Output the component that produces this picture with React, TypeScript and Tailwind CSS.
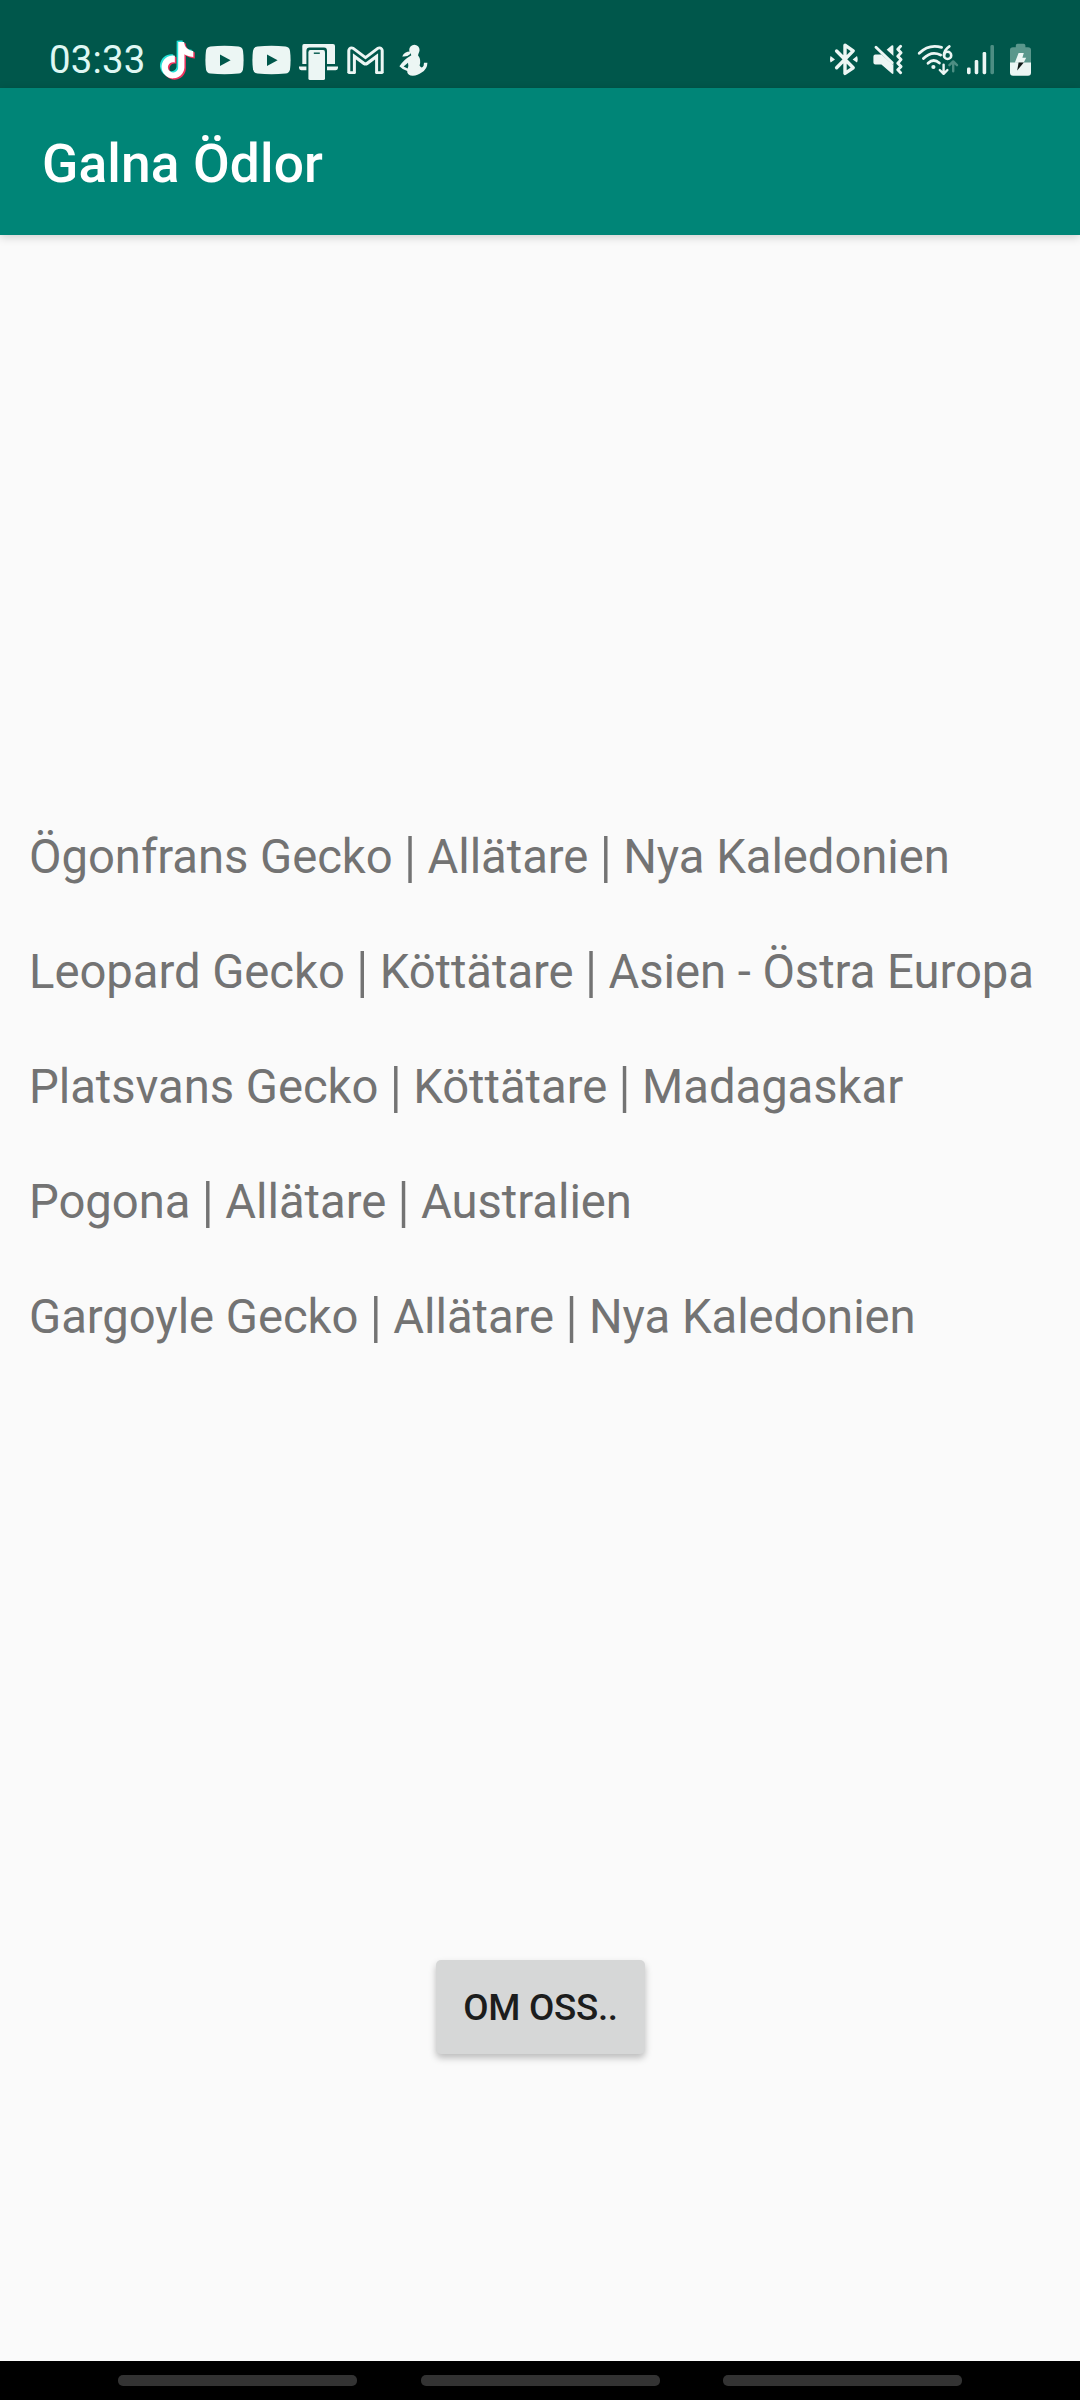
import React from "react";

const INK = "#ecf6f4";
const BAR = "#00574b";

const TIKTOK =
  "M12.525.02c1.31-.02 2.61-.01 3.91-.02.08 1.53.63 3.09 1.75 4.17 1.12 1.11 2.7 1.62 4.24 1.79v4.03c-1.44-.05-2.89-.35-4.2-.97-.57-.26-1.1-.59-1.62-.93-.01 2.92.01 5.84-.02 8.75-.08 1.4-.54 2.79-1.35 3.94-1.31 1.92-3.58 3.17-5.91 3.21-1.43.08-2.86-.31-4.08-1.03-2.02-1.19-3.44-3.37-3.65-5.71-.02-.5-.03-1-.01-1.49.18-1.9 1.12-3.72 2.58-4.96 1.66-1.44 3.98-2.13 6.15-1.72.02 1.48-.04 2.96-.04 4.44-.99-.32-2.15-.23-3.02.37-.63.41-1.11 1.04-1.36 1.75-.21.51-.15 1.07-.14 1.61.24 1.64 1.82 3.02 3.5 2.87 1.12-.01 2.19-.66 2.77-1.61.19-.33.4-.67.41-1.06.1-1.79.06-3.57.07-5.36.01-4.03-.01-8.05.02-12.07z";

function TikTokIcon() {
  return (
    <svg className="h-12 w-9" viewBox="0 0 36 48">
      <path d={TIKTOK} fill="#25e0d6" transform="translate(-2.4 4.6) scale(1.52)" />
      <path d={TIKTOK} fill="#f0355f" transform="translate(.7 7.2) scale(1.52)" />
      <path d={TIKTOK} fill="#fff" transform="translate(-.8 5.9) scale(1.52)" />
    </svg>
  );
}

function YouTubeIcon() {
  return (
    <svg className="h-12 w-[39px]" viewBox="0 0 39 48">
      <path
        d="M5.5 10.4Q19.5 9.2 33.5 10.4Q37.4 10.8 38 14.8Q39.2 24 38 33.2Q37.4 37.2 33.5 37.6Q19.5 38.8 5.5 37.6Q1.6 37.2 1 33.2Q-.2 24 1 14.8Q1.6 10.8 5.5 10.4Z"
        fill={INK}
      />
      <path d="M15 18.4 25.6 24.2 15 30Z" fill={BAR} />
    </svg>
  );
}

function DeviceLinkIcon() {
  return (
    <svg className="h-12 w-[39px]" viewBox="0 0 39 48">
      <path d="M5 8H34Q36 8 36 10V28H3.3V10Q3.3 8 5 8Z" fill={INK} />
      <path d="M0 30.6H39V32Q38.6 34.2 36.6 34.2H2.4Q.4 34.2 0 32Z" fill={INK} />
      <path d="M7.4 45V15Q7.4 11.6 10.6 11.6H25Q28 11.6 28 15V45Z" fill={BAR} />
      <path d="M9.4 16.4Q9.4 14 11.4 14H24.2Q26 14 26 16.4V42.4Q26 44 24.4 44H11Q9.4 44 9.4 42.4Z" fill={INK} />
      <path d="M14.8 17.2H20.8" stroke={BAR} strokeWidth="1.4" />
    </svg>
  );
}

function GmailIcon() {
  return (
    <svg className="h-12 w-[37px]" viewBox="0 0 37 48" fill="none" strokeLinejoin="round">
      <path d="M4.6 36.8V14.8L18.5 25.2 32.4 14.8V36.8" stroke={INK} strokeWidth="8.6" />
      <path d="M.4 36H8.8V37.2Q8.6 38 7.6 38H2Q.4 38 .4 36.6ZM28.2 36H36.6V36.6Q36.6 38 35 38H29.4Q28.2 38 28.2 37Z" fill={INK} />
      <path d="M4.6 35.3V14.6L18.5 25 32.4 14.6V35.3" stroke={BAR} strokeWidth="2.6" />
    </svg>
  );
}

function DuoIcon() {
  return (
    <svg className="h-12 w-[29px]" viewBox="0 0 29 48" fill={INK}>
      <circle cx="15.4" cy="13.9" r="5.2" />
      <path d="M11.6 15 19.8 16.2 18.6 21H12.4Z" />
      <path d="M11.6 15.6Q5.4 15.4 3.2 20.4Q7.8 21.2 11.4 18Z" />
      <path d="M12 19.4 19 19.2Q22.4 23.6 20.6 29.4 22.6 33.4 24.6 29.8L25 26.8H28.4Q28.4 33.2 22.6 36.6 18 40.4 11.6 39.6 8 38.4 8.2 35Q4.2 34.2.4 30.2 4.6 23.6 12 19.4Z" />
      <path d="M9 26.8 4.6 30.6 8.6 32.6Q9.8 29.6 9 26.8Z" fill={BAR} />
    </svg>
  );
}

function BluetoothIcon() {
  return (
    <svg className="h-12 w-7" viewBox="0 0 28 48" fill="none">
      <path
        d="M6.6 15 23.2 31.8 15 37.4V9.2L23.2 14.9 6.6 31.8"
        stroke={INK}
        strokeWidth="3.4"
        strokeLinecap="round"
        strokeLinejoin="round"
      />
      <path d="M.6 20 5 23.4.6 26.6Q-.6 23.4.6 20ZM27 20 22.6 23.4 27 26.6Q28.4 23.4 27 20Z" fill={INK} />
    </svg>
  );
}

function MuteVibrateIcon() {
  return (
    <svg className="h-12 w-[30px]" viewBox="0 0 30 48" fill="none">
      <path d="M2.4 18.6H8L18.6 9.4Q20.4 8.6 20.4 10.4V37Q20.4 38.8 18.8 37.6L8.4 28.4H2.4Q.4 28.4.4 26.4V20.6Q.4 18.6 2.4 18.6Z" fill={INK} />
      <path d="M1 6.8 22 26" stroke={BAR} strokeWidth="7" />
      <path d="M3 11.2 19.2 26.8" stroke={INK} strokeWidth="2.9" strokeLinecap="round" />
      <path
        d="M27.6 10.2 24.8 13.2 28 16.8 24.8 20.2 28 23.6 24.8 27.2 28 30.6 24.8 33.8 27.6 36.8"
        stroke={INK}
        strokeWidth="2.9"
        strokeLinecap="round"
        strokeLinejoin="round"
      />
    </svg>
  );
}

function WifiIcon() {
  return (
    <svg className="h-12 w-[42px]" viewBox="0 0 42 48" fill="none" strokeLinecap="round" strokeLinejoin="round">
      <path d="M2.2 17.2Q12 7.6 24.6 11.4" stroke={INK} strokeWidth="2.8" />
      <path d="M6.4 22.6Q14.4 14.4 23.6 19" stroke={INK} strokeWidth="2.8" />
      <path d="M11 27.2Q16.6 21.8 22.4 27" stroke={INK} strokeWidth="2.8" />
      <circle cx="16.4" cy="31" r="2.1" fill={INK} />
      <path d="M32.4 10.4Q27 14 27 19.6" stroke={INK} strokeWidth="2.6" />
      <circle cx="30.6" cy="19.4" r="3.6" stroke={INK} strokeWidth="2.6" />
      <path d="M26.6 28.6V37.4M22.8 34 26.6 37.8 30.4 34" stroke={INK} strokeWidth="2.4" />
      <path d="M36.2 35.2V26.4M32.4 29.2 36.2 25.4 40 29.2" stroke="#4d8e83" strokeWidth="2.4" />
    </svg>
  );
}

function SignalIcon() {
  return (
    <svg className="h-12 w-[27px]" viewBox="0 0 27 48" fill={INK}>
      <rect y="31.4" width="3.6" height="6.8" rx="1.4" />
      <rect x="7.7" y="24" width="3.6" height="14.2" rx="1.4" />
      <rect x="15.6" y="16" width="3.6" height="22.2" rx="1.4" />
      <rect x="23.4" y="9" width="3.6" height="29.2" rx="1.4" fill="#4d8e83" />
    </svg>
  );
}

function BatteryIcon() {
  return (
    <svg className="h-12 w-[21px]" viewBox="0 0 21 48">
      <path d="M0 27V14Q0 11.2 3 11.2H5.8V9.6Q5.8 7.8 7.6 7.8H13.6Q15.4 7.8 15.4 9.6V11.2H18Q21 11.2 21 14V27Z" fill="#5a978c" />
      <path d="M0 26.6H21V36.8Q21 39.8 18 39.8H3Q0 39.8 0 36.8Z" fill={INK} />
      <path d="M8.6 17 13.8 17 12.4 21.8H16.2L13.6 26.7H4.8Z" fill={INK} />
      <path d="M8.6 26.6H13.8L7.2 34.4Z" fill="#121a19" />
    </svg>
  );
}

const LIZARDS = [
  "Ögonfrans Gecko | Allätare | Nya Kaledonien",
  "Leopard Gecko | Köttätare | Asien - Östra Europa",
  "Platsvans Gecko | Köttätare | Madagaskar",
  "Pogona | Allätare | Australien",
  "Gargoyle Gecko | Allätare | Nya Kaledonien",
];

// Divider bars are slightly taller than the font's own glyph.
function Row({ line }: { line: string }) {
  return (
    <li className="h-[115px] text-[47.25px] leading-[115px] tracking-[-0.05px] whitespace-nowrap text-[#737373]">
      {line.split("|").map((part, i) => (
        <React.Fragment key={i}>
          {i > 0 && <span className="inline-block translate-y-px scale-y-[1.155]">|</span>}
          {part}
        </React.Fragment>
      ))}
    </li>
  );
}

export default function App() {
  return (
    <div className="flex h-[2400px] w-[1080px] flex-col overflow-hidden bg-[#fafafa] font-['Roboto',sans-serif]">
      <div className="flex h-[88px] shrink-0 items-end justify-between bg-[#00574b] pr-[49px] pl-[49px] pb-1">
        <div className="flex items-center">
          <span className="w-[111px] whitespace-nowrap text-[38.4px] leading-[46px] tracking-[0.2px] text-[#dff7f3]">03:33</span>
          <TikTokIcon />
          <div className="ml-[9px] flex items-center gap-2">
            <YouTubeIcon />
            <YouTubeIcon />
            <DeviceLinkIcon />
            <div className="ml-px">
              <GmailIcon />
            </div>
          </div>
          <div className="ml-[14.5px]">
            <DuoIcon />
          </div>
        </div>
        <div className="flex items-center">
          <BluetoothIcon />
          <div className="ml-[15px] flex">
            <MuteVibrateIcon />
          </div>
          <div className="ml-[14px] flex">
            <WifiIcon />
          </div>
          <div className="ml-2 flex">
            <SignalIcon />
          </div>
          <div className="ml-4 flex">
            <BatteryIcon />
          </div>
        </div>
      </div>

      <header className="z-10 flex h-[147px] shrink-0 items-center bg-[#008577] pt-[6px] pl-[42px] shadow-[0_2px_9px_rgba(0,0,0,0.18)]">
        <h1 className="text-[53.3px] leading-none font-medium tracking-[0.12px] text-white">Galna Ödlor</h1>
      </header>

      <main className="flex grow flex-col items-center pt-[565px]">
        <ul className="w-full pl-[29px]">
          {LIZARDS.map((line) => (
            <Row key={line} line={line} />
          ))}
        </ul>
        <button className="mt-[585px] ml-[1px] h-[94px] w-[209px] rounded-[5px] bg-[#d6d7d7] pt-[2px] text-[36.75px] leading-none font-medium tracking-[-0.3px] whitespace-nowrap text-[#1c1d1d] shadow-[0_4px_7px_rgba(0,0,0,0.25)]">
          OM OSS..
        </button>
      </main>

      <nav className="flex h-[39px] shrink-0 justify-center gap-[63.5px] bg-black pt-[14px]">
        <div className="h-[11px] w-[239px] rounded-[5px] bg-[#333]" />
        <div className="h-[11px] w-[239px] rounded-[5px] bg-[#333]" />
        <div className="h-[11px] w-[239px] rounded-[5px] bg-[#333]" />
      </nav>
    </div>
  );
}
